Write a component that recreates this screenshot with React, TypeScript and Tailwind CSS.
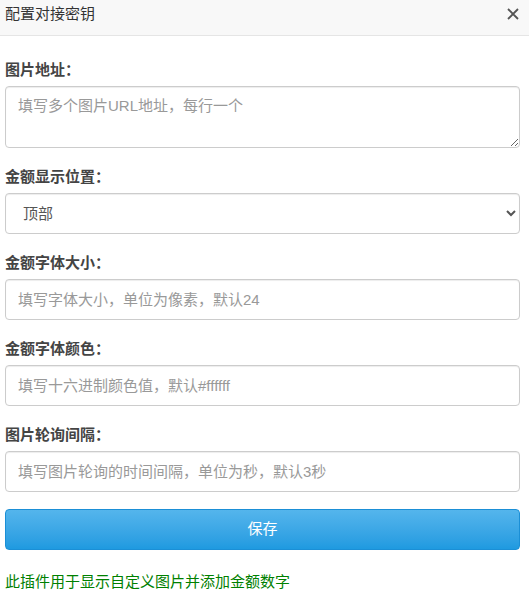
import React, { useState } from "react";

const fieldCls =
  "block w-full rounded-[4px] border border-[#ccc] bg-white px-3 text-[15px] text-[#555] placeholder:text-[#999] outline-none shadow-[inset_0_1px_1px_rgba(0,0,0,0.075)]";

const Label: React.FC<{ text: string }> = ({ text }) => (
  <p className="m-0 mb-[6px] h-[20px] text-[15px] font-bold leading-[20px] text-[#444]">
    {text}
  </p>
);

export default function App() {
  const [form, setForm] = useState({
    images: "",
    position: "top",
    fontSize: "",
    fontColor: "",
    interval: "",
  });

  const handleChange = (
    e: React.ChangeEvent<HTMLInputElement | HTMLTextAreaElement | HTMLSelectElement>,
  ) => {
    setForm({ ...form, [e.target.name]: e.target.value });
  };

  return (
    <div
      className="h-[591px] w-[529px] overflow-hidden bg-white"
      style={{ fontFamily: '"Liberation Sans", "Noto Sans CJK SC", sans-serif' }}
    >
      {/* header */}
      <div className="flex h-[36px] items-start justify-between border-b border-[#e5e5e5] bg-[#f8f8f8] pl-[5px] pr-[10px] pt-[4px]">
        <span className="text-[15px] leading-[20px] text-[#333]">配置对接密钥</span>
        <button className="mt-[4px] text-[#555]">
          <svg width="12" height="12" viewBox="0 0 12 12">
            <path d="M1 1L11 11M11 1L1 11" stroke="currentColor" strokeWidth="1.8" />
          </svg>
        </button>
      </div>

      <form className="pl-[5px] pr-[9px] pt-[24px]">
        <Label text="图片地址：" />
        <textarea
          name="images"
          value={form.images}
          onChange={handleChange}
          placeholder="填写多个图片URL地址，每行一个"
          className={`${fieldCls} h-[62px] py-[9px] leading-[20px]`}
        />

        <div className="mt-[19px]">
          <Label text="金额显示位置：" />
          <select
            name="position"
            value={form.position}
            onChange={handleChange}
            className={`${fieldCls} h-[41px] pl-[13px] text-[#555]`}
          >
            <option value="top">顶部</option>
            <option value="middle">中间</option>
            <option value="bottom">底部</option>
          </select>
        </div>

        <div className="mt-[19px]">
          <Label text="金额字体大小：" />
          <input
            name="fontSize"
            value={form.fontSize}
            onChange={handleChange}
            placeholder="填写字体大小，单位为像素，默认24"
            className={`${fieldCls} h-[41px]`}
          />
        </div>

        <div className="mt-[19px]">
          <Label text="金额字体颜色：" />
          <input
            name="fontColor"
            value={form.fontColor}
            onChange={handleChange}
            placeholder="填写十六进制颜色值，默认#ffffff"
            className={`${fieldCls} h-[41px]`}
          />
        </div>

        <div className="mt-[19px]">
          <Label text="图片轮询间隔：" />
          <input
            name="interval"
            value={form.interval}
            onChange={handleChange}
            placeholder="填写图片轮询的时间间隔，单位为秒，默认3秒"
            className={`${fieldCls} h-[41px]`}
          />
        </div>

        <button
          type="button"
          className="mt-[17px] block h-[41px] w-full rounded-[4px] border border-[#1b8fd6] bg-gradient-to-b from-[#54b5ec] to-[#1e9ae0] text-[15px] text-white"
        >
          保存
        </button>

        <p className="m-0 mt-[22px] text-[15px] leading-[20px] text-[#008000]">
          此插件用于显示自定义图片并添加金额数字
        </p>
      </form>
    </div>
  );
}
